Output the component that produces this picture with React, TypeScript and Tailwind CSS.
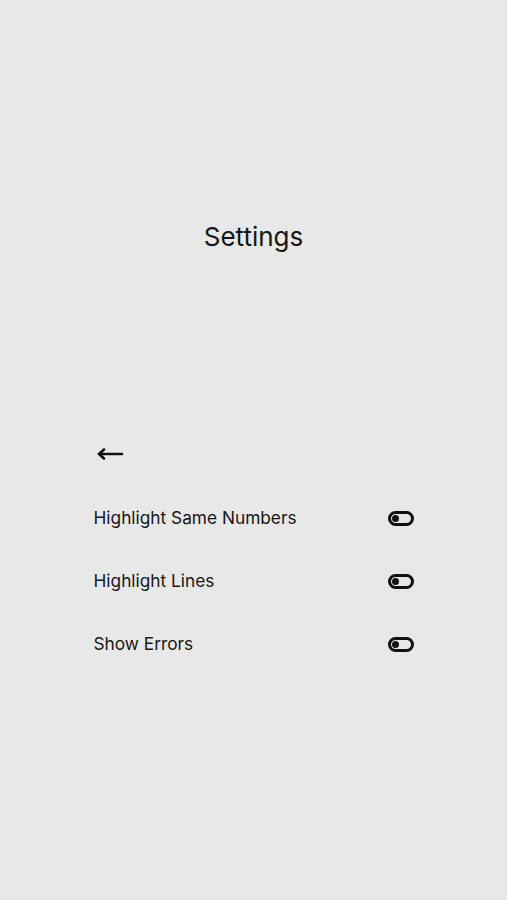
import React, { useState } from 'react';

const options = [
  { id: 'same', label: 'Highlight Same Numbers' },
  { id: 'lines', label: 'Highlight Lines' },
  { id: 'errors', label: 'Show Errors' },
];

const Toggle = ({ on, onClick }: { on: boolean; onClick: () => void }) => (
  <button
    onClick={onClick}
    className={`mt-[2px] w-[26px] h-[15px] rounded-full border-[3px] border-[#111] flex items-center px-[1.5px] ${on ? 'justify-end' : 'justify-start'}`}
  >
    <span className="w-[7px] h-[7px] rounded-full bg-[#111]" />
  </button>
);

const App = () => {
  const [values, setValues] = useState<Record<string, boolean>>({});

  return (
    <div className="min-h-screen bg-[#e8e8e8] flex flex-col items-center text-[#161616]" style={{ fontFamily: 'Inter, sans-serif' }}>
      {/* Title */}
      <h1 className="pt-[220px] text-[26px] leading-[34px]">Settings</h1>

      <div className="w-[320px] mt-[192px] flex flex-col">
        {/* Back */}
        <button className="w-[30px] h-[16px] ml-[2px] flex items-center">
          <svg width="28" height="14" viewBox="0 0 28 14" fill="none" stroke="#111" strokeWidth="2.6" strokeLinecap="round" strokeLinejoin="round">
            <path d="M26 7H3" />
            <path d="M8 2.5L3 7L8 11.5" />
          </svg>
        </button>

        {/* Options */}
        <div className="mt-[44px] flex flex-col gap-[40px]">
          {options.map((o) => (
            <div key={o.id} className="flex items-center justify-between h-[23px]">
              <span className="text-[17.3px] leading-[23px]">{o.label}</span>
              <Toggle
                on={!!values[o.id]}
                onClick={() => setValues({ ...values, [o.id]: !values[o.id] })}
              />
            </div>
          ))}
        </div>
      </div>
    </div>
  );
};

export default App;
